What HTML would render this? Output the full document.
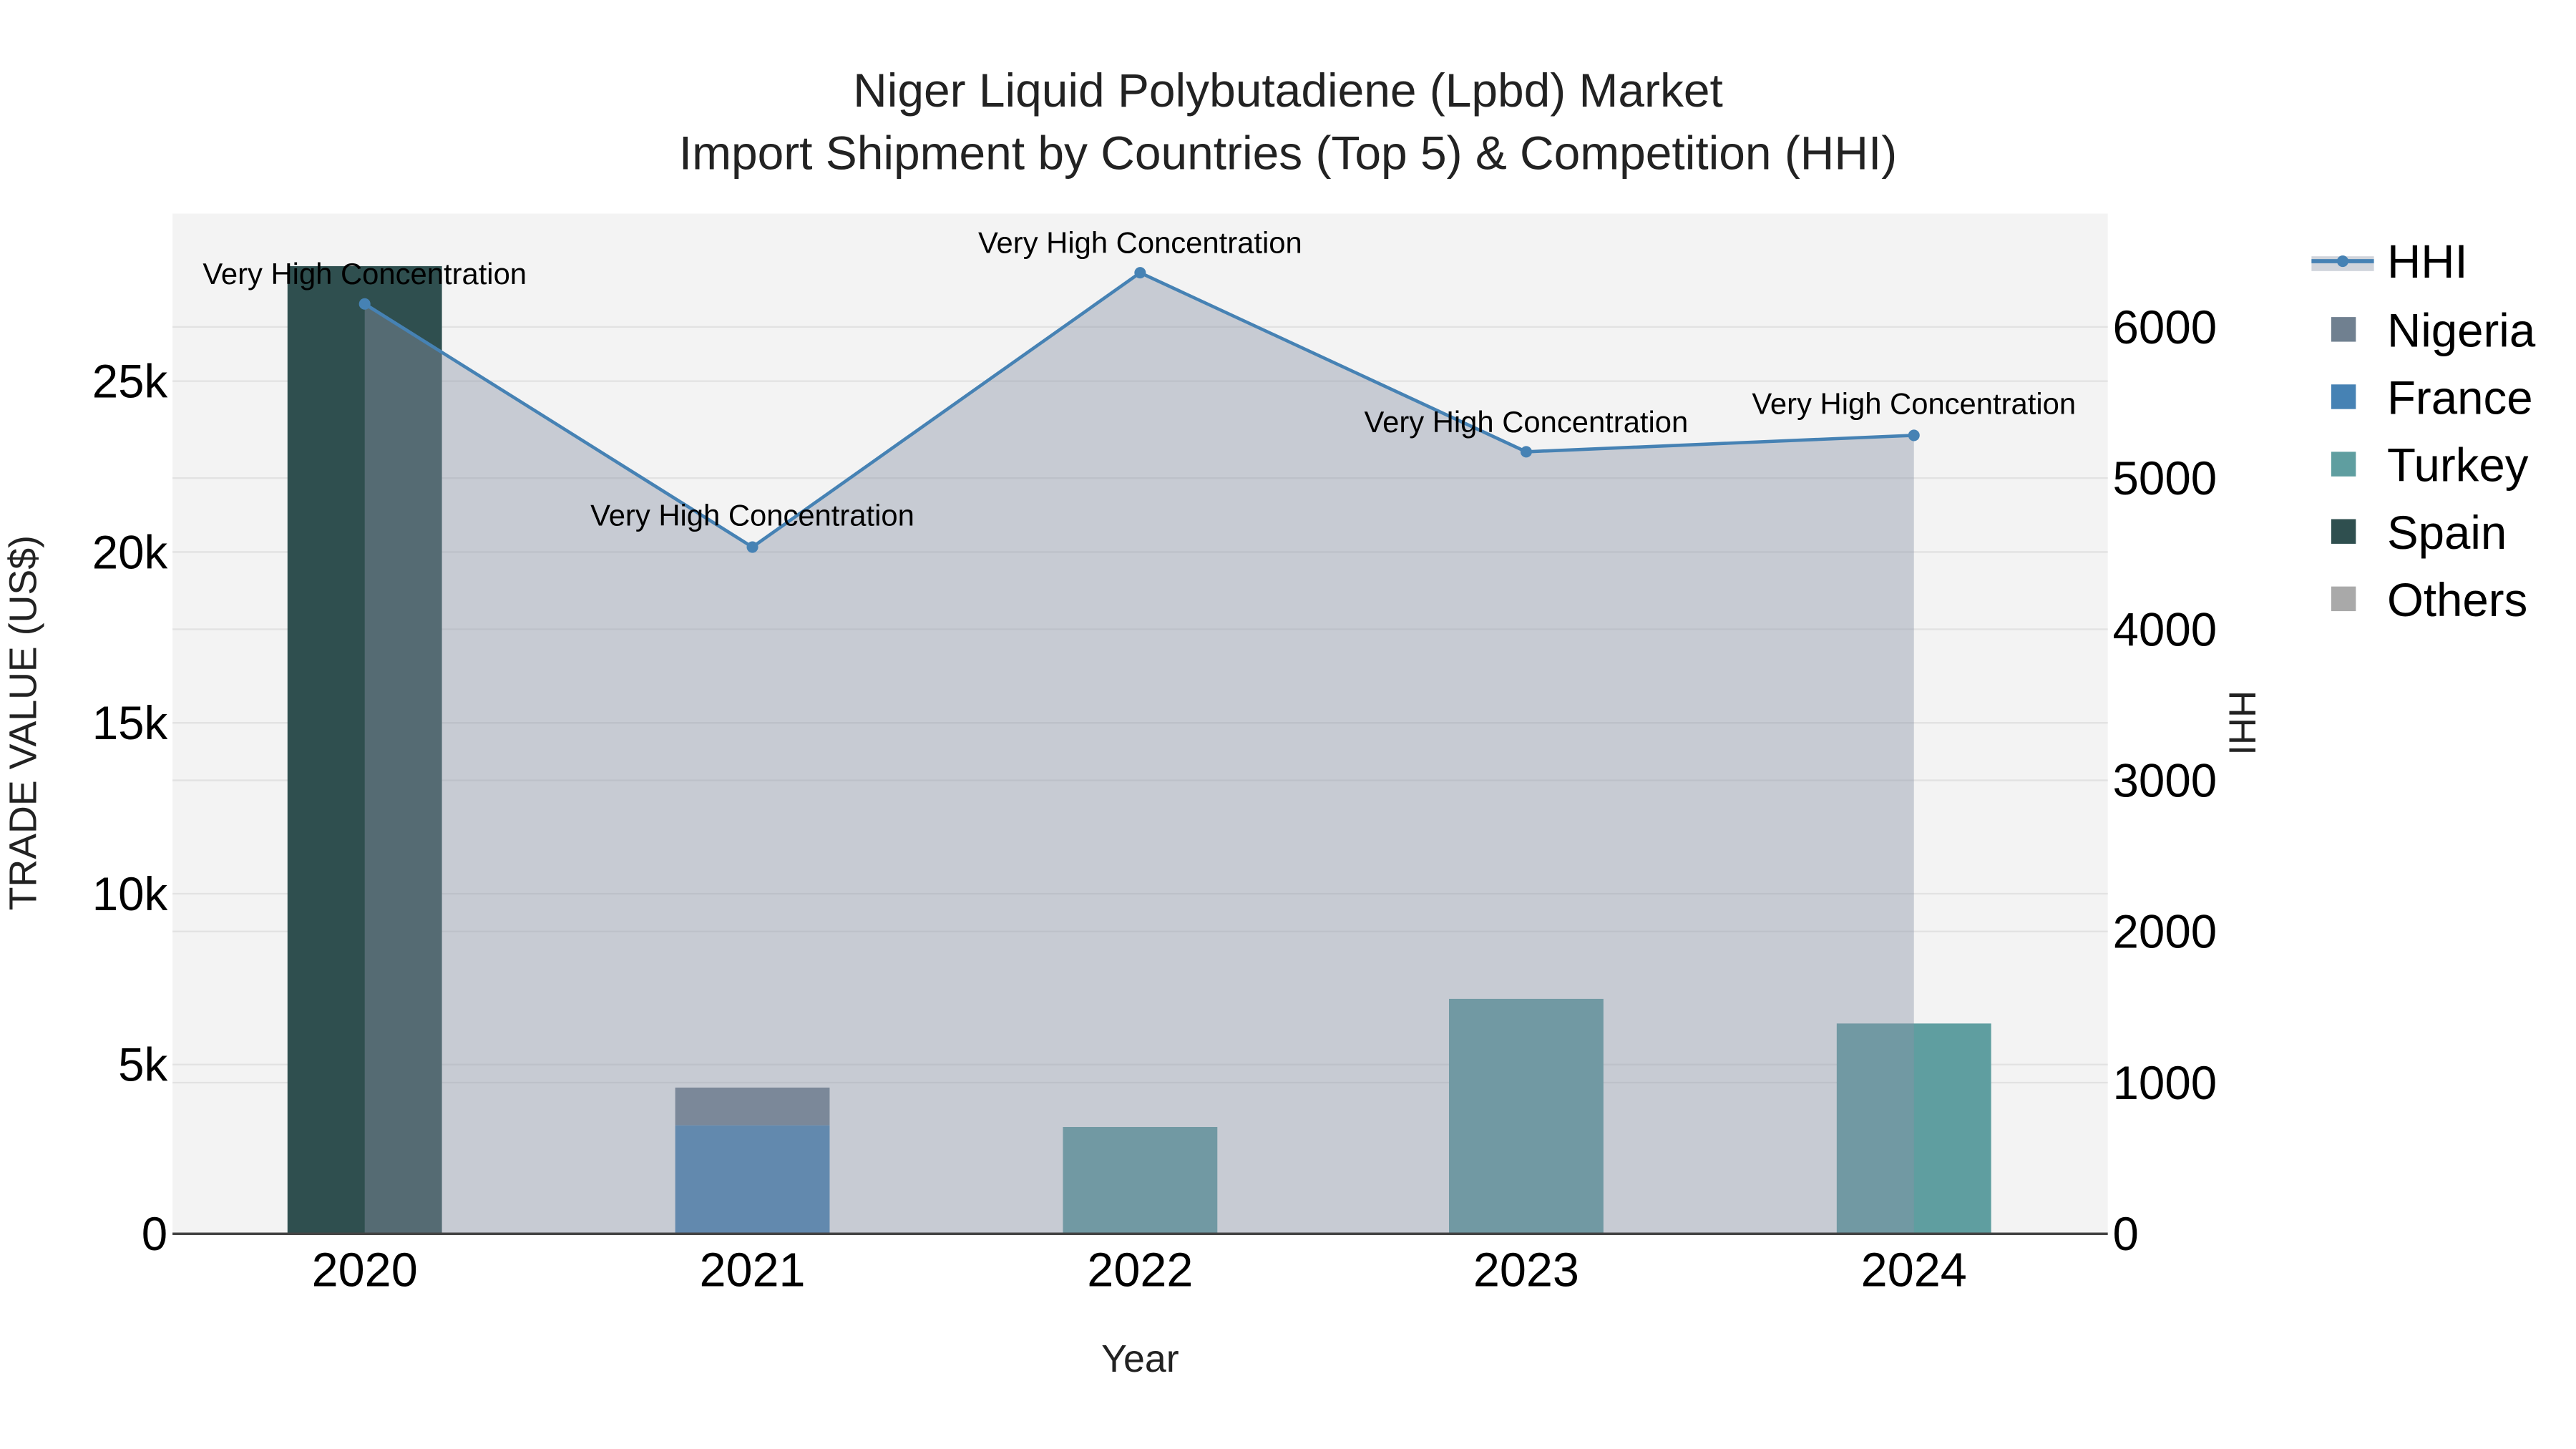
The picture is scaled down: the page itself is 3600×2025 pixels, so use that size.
<!DOCTYPE html>
<html><head><meta charset="utf-8"><style>
html,body{margin:0;padding:0;background:#fff;}
svg{display:block;}
text{font-family:"Liberation Sans",Arial,sans-serif;}
</style></head><body>
<svg width="3600" height="2025" viewBox="0 0 1568 882" preserveAspectRatio="none" xmlns="http://www.w3.org/2000/svg">
<rect x="0" y="0" width="1568" height="882" fill="#fff"/>
<rect x="105" y="130" width="1178" height="621" fill="#f3f3f3"/>
<g stroke="#e2e2e2" stroke-width="1">
<line x1="105" x2="1283" y1="232" y2="232"/><line x1="105" x2="1283" y1="336" y2="336"/>
<line x1="105" x2="1283" y1="440" y2="440"/><line x1="105" x2="1283" y1="544" y2="544"/>
<line x1="105" x2="1283" y1="648" y2="648"/>
<line x1="105" x2="1283" y1="199" y2="199"/><line x1="105" x2="1283" y1="291" y2="291"/>
<line x1="105" x2="1283" y1="383" y2="383"/><line x1="105" x2="1283" y1="475" y2="475"/>
<line x1="105" x2="1283" y1="567" y2="567"/><line x1="105" x2="1283" y1="659" y2="659"/>
</g>
<rect x="175" y="162" width="94" height="589" fill="#2f4f4f"/>
<rect x="411" y="662" width="94" height="23" fill="#708090"/>
<rect x="411" y="685" width="94" height="66" fill="#4682b4"/>
<rect x="647" y="686" width="94" height="65" fill="#5f9ea0"/>
<rect x="882" y="608" width="94" height="143" fill="#5f9ea0"/>
<rect x="1118" y="623" width="94" height="128" fill="#5f9ea0"/>
<polygon points="222,185 458,333 694,166 929,275 1165,265 1165,751 222,751" fill="rgba(138,148,166,0.42)"/>
<polyline points="222,185 458,333 694,166 929,275 1165,265" fill="none" stroke="#4682b4" stroke-width="2"/>
<g fill="#4682b4"><circle cx="222" cy="185" r="3.5"/><circle cx="458" cy="333" r="3.5"/><circle cx="694" cy="166" r="3.5"/><circle cx="929" cy="275" r="3.5"/><circle cx="1165" cy="265" r="3.5"/></g>
<line x1="105" x2="1283" y1="751" y2="751" stroke="#444" stroke-width="1.5"/>
<g font-size="18.2" text-anchor="middle" fill="#000">
<text x="222" y="173">Very High Concentration</text>
<text x="458" y="320">Very High Concentration</text>
<text x="694" y="154">Very High Concentration</text>
<text x="929" y="263">Very High Concentration</text>
<text x="1165" y="252">Very High Concentration</text>
</g>
<g font-size="28.7" text-anchor="middle" fill="#222">
<text x="784" y="65">Niger Liquid Polybutadiene (Lpbd) Market</text>
<text x="784" y="103">Import Shipment by Countries (Top 5) &amp; Competition (HHI)</text>
</g>
<g font-size="28.5" text-anchor="end" fill="#000">
<text x="102" y="242">25k</text><text x="102" y="346">20k</text><text x="102" y="450">15k</text>
<text x="102" y="554">10k</text><text x="102" y="658">5k</text><text x="102" y="761">0</text>
</g>
<g font-size="28.5" text-anchor="start" fill="#000">
<text x="1286" y="209">6000</text><text x="1286" y="301">5000</text><text x="1286" y="393">4000</text>
<text x="1286" y="485">3000</text><text x="1286" y="577">2000</text><text x="1286" y="669">1000</text>
<text x="1286" y="761">0</text>
</g>
<g font-size="29" text-anchor="middle" fill="#000">
<text x="222" y="783">2020</text><text x="458" y="783">2021</text><text x="694" y="783">2022</text>
<text x="929" y="783">2023</text><text x="1165" y="783">2024</text>
</g>
<text x="694" y="835" font-size="23.4" text-anchor="middle" fill="#222">Year</text>
<text transform="translate(22,440) rotate(-90)" font-size="23.4" text-anchor="middle" fill="#222">TRADE VALUE (US$)</text>
<text transform="translate(1357,440) rotate(90)" font-size="23" text-anchor="middle" fill="#222">HHI</text>
<rect x="1407" y="156" width="38" height="9" fill="rgba(138,148,166,0.4)"/>
<line x1="1407" x2="1445" y1="159" y2="159" stroke="#4682b4" stroke-width="2.5"/>
<circle cx="1426" cy="159" r="3.5" fill="#4682b4"/>
<rect x="1419" y="193" width="15" height="15" fill="#708090"/>
<rect x="1419" y="234" width="15" height="15" fill="#4682b4"/>
<rect x="1419" y="275" width="15" height="15" fill="#5f9ea0"/>
<rect x="1419" y="316" width="15" height="15" fill="#2f4f4f"/>
<rect x="1419" y="357" width="15" height="15" fill="#a9a9a9"/>
<g font-size="28.5" fill="#000">
<text x="1453" y="169">HHI</text><text x="1453" y="211">Nigeria</text><text x="1453" y="252">France</text>
<text x="1453" y="293">Turkey</text><text x="1453" y="334">Spain</text><text x="1453" y="375">Others</text>
</g>
</svg>
</body></html>
